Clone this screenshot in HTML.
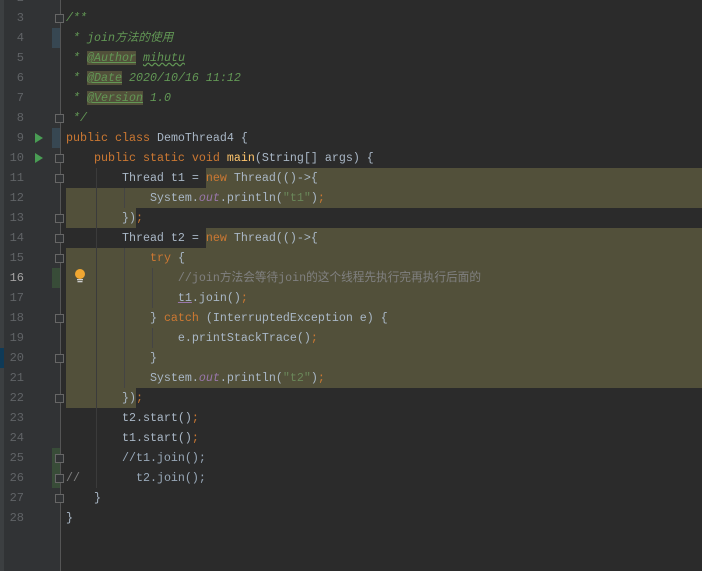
<!DOCTYPE html>
<html><head><meta charset="utf-8"><style>
body{margin:0;width:702px;height:571px;background:#2b2b2b;overflow:hidden;position:relative;font-family:"Liberation Mono","Noto Sans CJK SC",monospace;font-size:11.67px}
.g{position:absolute;left:0;top:0;width:61px;height:571px;background:#313335}
.s{position:absolute;left:0;top:0;width:4px;height:571px;background:#3c3f41}
.sep{position:absolute;left:60px;top:0;width:1px;height:571px;background:#555}
.hl{position:absolute;background:#52503a}
.n{position:absolute;left:0;width:24px;text-align:right;color:#606366;line-height:20px;font-size:12px}
.l{position:absolute;left:66px;white-space:pre;line-height:20px;color:#a9b7c6}
.k{color:#cc7832}.c{color:#808080}.d{color:#629755;font-style:italic}.st{color:#6a8759}.f{color:#9876aa;font-style:italic}.m{color:#ffc66d}
.t{text-decoration:underline;background:#52503a}
.ig{position:absolute;width:1px;background:#3b3b3b}
.fm{position:absolute;left:55px;width:9px;height:9px;border:1px solid #666;background:#313335;box-sizing:border-box}
.mk{position:absolute;left:52px;width:8px;height:20px}
.run{position:absolute;left:35px;width:0;height:0;border-left:8px solid #499c54;border-top:5px solid transparent;border-bottom:5px solid transparent}
</style></head><body>
<div class="g"></div><div class="s"></div>
<div style="position:absolute;left:0;top:348px;width:4px;height:20px;background:#0f3a57"></div>
<div class="sep"></div>
<div class="mk" style="top:28px;background:#374752"></div>
<div class="mk" style="top:128px;background:#374752"></div>
<div class="mk" style="top:268px;background:#384c38"></div>
<div class="mk" style="top:448px;height:40px;background:#384c38"></div>
<div class="run" style="top:133px"></div><div class="run" style="top:153px"></div>
<div class="hl" style="left:206px;top:168px;width:496px;height:20px"></div>
<div class="hl" style="left:66px;top:188px;width:636px;height:20px"></div>
<div class="hl" style="left:66px;top:208px;width:70px;height:20px"></div>
<div class="hl" style="left:206px;top:228px;width:496px;height:20px"></div>
<div class="hl" style="left:66px;top:248px;width:636px;height:140px"></div>
<div class="hl" style="left:66px;top:388px;width:70px;height:20px"></div>
<div class="ig" style="left:96px;top:168px;height:320px"></div>
<div class="ig" style="left:124px;top:188px;height:20px;background:#444"></div>
<div class="ig" style="left:124px;top:248px;height:140px;background:#444"></div>
<div class="ig" style="left:152px;top:268px;height:40px;background:#444"></div>
<div class="ig" style="left:152px;top:328px;height:20px;background:#444"></div>
<div class="fm" style="top:14px"></div><div class="fm" style="top:114px"></div>
<div class="fm" style="top:154px"></div><div class="fm" style="top:174px"></div>
<div class="fm" style="top:214px"></div><div class="fm" style="top:234px"></div>
<div class="fm" style="top:254px"></div><div class="fm" style="top:314px"></div>
<div class="fm" style="top:354px"></div><div class="fm" style="top:394px"></div>
<div class="fm" style="top:454px"></div><div class="fm" style="top:474px"></div>
<div class="fm" style="top:494px"></div>
<svg style="position:absolute;left:73px;top:268px" width="14" height="16"><circle cx="7" cy="6" r="5" fill="#f0a732"/><rect x="4" y="11" width="6" height="1.3" fill="#ccc"/><rect x="4.5" y="13" width="5" height="1.3" fill="#ccc"/></svg>
<div class="n" style="top:-12px">2</div><div class="n" style="top:8px">3</div><div class="n" style="top:28px">4</div><div class="n" style="top:48px">5</div><div class="n" style="top:68px">6</div><div class="n" style="top:88px">7</div><div class="n" style="top:108px">8</div><div class="n" style="top:128px">9</div><div class="n" style="top:148px">10</div><div class="n" style="top:168px">11</div><div class="n" style="top:188px">12</div><div class="n" style="top:208px">13</div><div class="n" style="top:228px">14</div><div class="n" style="top:248px">15</div><div class="n" style="top:268px;color:#a4a3a3">16</div><div class="n" style="top:288px">17</div><div class="n" style="top:308px">18</div><div class="n" style="top:328px">19</div><div class="n" style="top:348px">20</div><div class="n" style="top:368px">21</div><div class="n" style="top:388px">22</div><div class="n" style="top:408px">23</div><div class="n" style="top:428px">24</div><div class="n" style="top:448px">25</div><div class="n" style="top:468px">26</div><div class="n" style="top:488px">27</div><div class="n" style="top:508px">28</div>
<div class="l d" style="top:8px">/**</div>
<div class="l d" style="top:28px"> * join方法的使用</div>
<div class="l d" style="top:48px"> * <span class="t">@Author</span> <span style="text-decoration:underline wavy #629755">mihutu</span></div>
<div class="l d" style="top:68px"> * <span class="t">@Date</span> 2020/10/16 11:12</div>
<div class="l d" style="top:88px"> * <span class="t">@Version</span> 1.0</div>
<div class="l d" style="top:108px"> */</div>
<div class="l" style="top:128px"><span class="k">public class</span> DemoThread4 {</div>
<div class="l" style="top:148px">    <span class="k">public static void</span> <span class="m">main</span>(String[] args) {</div>
<div class="l" style="top:168px">        Thread t1 = <span class="k">new</span> Thread(()-&gt;{</div>
<div class="l" style="top:188px">            System.<span class="f">out</span>.println(<span class="st">"t1"</span>)<span class="k">;</span></div>
<div class="l" style="top:208px">        })<span class="k">;</span></div>
<div class="l" style="top:228px">        Thread t2 = <span class="k">new</span> Thread(()-&gt;{</div>
<div class="l" style="top:248px">            <span class="k">try</span> {</div>
<div class="l c" style="top:268px">                //join方法会等待join的这个线程先执行完再执行后面的</div>
<div class="l" style="top:288px">                <span style="color:#a9b7c6;text-decoration:underline #9876aa">t1</span>.join()<span class="k">;</span></div>
<div class="l" style="top:308px">            } <span class="k">catch</span> (InterruptedException e) {</div>
<div class="l" style="top:328px">                e.printStackTrace()<span class="k">;</span></div>
<div class="l" style="top:348px">            }</div>
<div class="l" style="top:368px">            System.<span class="f">out</span>.println(<span class="st">"t2"</span>)<span class="k">;</span></div>
<div class="l" style="top:388px">        })<span class="k">;</span></div>
<div class="l" style="top:408px">        t2.start()<span class="k">;</span></div>
<div class="l" style="top:428px">        t1.start()<span class="k">;</span></div>
<div class="l" style="top:448px;color:#98a8b8">        //t1.join();</div>
<div class="l" style="top:468px;color:#98a8b8"><span class="c">//</span>        t2.join();</div>
<div class="l" style="top:488px">    }</div>
<div class="l" style="top:508px">}</div>
</body></html>
